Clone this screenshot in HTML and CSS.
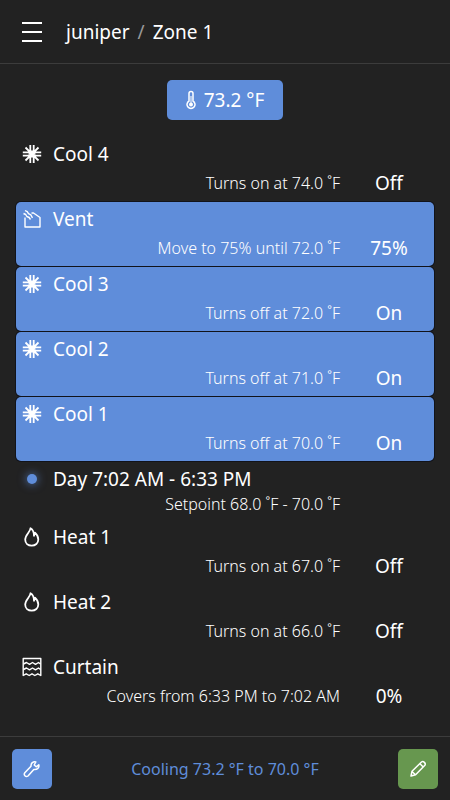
FILE: index.html
```html
<!DOCTYPE html>
<html lang="en">
<head>
  <meta charset="UTF-8" />
  <meta name="viewport" content="width=device-width, initial-scale=1.0" />
  <title>juniper / Zone 1</title>
  <link rel="stylesheet" href="styles.css">
</head>
<body>
  <svg class="sprite" aria-hidden="true">
    <symbol id="icon-cool" viewBox="0 0 20 20">
      <path d="M3.500 3.500l13 13M16.500 3.500l-13 13M8.300 1v5l1.700 3 1.700-3V1M8.300 19v-5l1.700-3 1.700 3v5M.8 8.300H6L9 10l-3 1.700H.8M19.200 8.300H14L11 10l3 1.700h5.200"/>
    </symbol>
    <symbol id="icon-vent" viewBox="0 0 20 20">
      <path d="M3 8.500V18h15V8.500L11.500 4H9.500"/>
      <path d="M1.500 4.500l2.200 1 1.200 2 2.200 1 1.400 2M3 1.500l2.200 1.200 1.300 2 2.300 1.200 1.700 3"/>
    </symbol>
    <symbol id="icon-heat" viewBox="0 0 20 20">
      <path d="M8.500 1.300C8.500 4.800 3.200 7.600 3.200 12.600c0 3.600 2.800 6.100 6.500 6.100s6.600-2.500 6.600-6.100c0-2.700-1.200-5-3.300-7l-1 3.200C12 5.300 10.800 2.600 8.500 1.300z"/>
    </symbol>
    <symbol id="icon-curtain" viewBox="0 0 20 20">
      <path d="M1.200 1.500h17.600v17l-3-1.700-3 1.700-2.800-1.700-2.800 1.700-3-1.700-3 1.700z"/>
      <path d="M1.500 7l3-1.500 3 1.800 3-1.800 3 1.800 3-1.800 2 1.500M1.500 12.500l3-1.500 3 1.800 3-1.800 3 1.800 3-1.800 2 1.500"/>
    </symbol>
  </svg>

  <header class="topbar">
    <button class="menu" aria-label="Menu">
      <svg viewBox="0 0 20 20"><path d="M0 1h20M0 10h20M0 19h20"/></svg>
    </button>
    <h1><a href="#juniper">juniper</a><span class="slash">/</span>Zone 1</h1>
  </header>

  <main>
    <button class="reading">
      <svg viewBox="0 0 10 20"><path d="M3 11V3.500a2 2 0 0 1 4 0V11a4 4 0 1 1-4 0z"/><path class="mercury" d="M5 6v8"/><circle class="dot" cx="5" cy="14.500" r="2"/></svg>
      73.2 °F
    </button>

    <ul class="stages">
      <li class="stage">
        <svg class="icon"><use href="#icon-cool"/></svg>
        <span class="name">Cool 4</span>
        <span class="detail">Turns on at 74.0 ˚F</span>
        <span class="value">Off</span>
      </li>
      <li class="stage active">
        <svg class="icon fine"><use href="#icon-vent"/></svg>
        <span class="name">Vent</span>
        <span class="detail">Move to 75% until 72.0 ˚F</span>
        <span class="value">75%</span>
      </li>
      <li class="stage active">
        <svg class="icon"><use href="#icon-cool"/></svg>
        <span class="name">Cool 3</span>
        <span class="detail">Turns off at 72.0 ˚F</span>
        <span class="value">On</span>
      </li>
      <li class="stage active">
        <svg class="icon"><use href="#icon-cool"/></svg>
        <span class="name">Cool 2</span>
        <span class="detail">Turns off at 71.0 ˚F</span>
        <span class="value">On</span>
      </li>
      <li class="stage active">
        <svg class="icon"><use href="#icon-cool"/></svg>
        <span class="name">Cool 1</span>
        <span class="detail">Turns off at 70.0 ˚F</span>
        <span class="value">On</span>
      </li>
      <li class="stage period">
        <span class="now"></span>
        <span class="name">Day 7:02 AM - 6:33 PM</span>
        <span class="detail">Setpoint 68.0 ˚F - 70.0 ˚F</span>
      </li>
      <li class="stage">
        <svg class="icon"><use href="#icon-heat"/></svg>
        <span class="name">Heat 1</span>
        <span class="detail">Turns on at 67.0 ˚F</span>
        <span class="value">Off</span>
      </li>
      <li class="stage">
        <svg class="icon"><use href="#icon-heat"/></svg>
        <span class="name">Heat 2</span>
        <span class="detail">Turns on at 66.0 ˚F</span>
        <span class="value">Off</span>
      </li>
      <li class="stage">
        <svg class="icon fine"><use href="#icon-curtain"/></svg>
        <span class="name">Curtain</span>
        <span class="detail">Covers from 6:33 PM to 7:02 AM</span>
        <span class="value">0%</span>
      </li>
    </ul>
  </main>

  <footer class="bottombar">
    <button class="tool" aria-label="Settings">
      <svg viewBox="0 0 18 18"><path d="M15.800 4.800l-2.600 2-2-1.800 1.600-3c-2.500-.6-5 1-4.800 4.200L1.800 12.800c-1.500 2 .8 4.800 3.200 3.200l5.800-6.600c3.400.5 5.800-1.600 5-4.600z"/></svg>
    </button>
    <p>Cooling 73.2 °F to 70.0 °F</p>
    <button class="tool edit" aria-label="Edit">
      <svg viewBox="0 0 18 18"><path d="M2 16l1-4.800L12.500 2c1.800-1.400 4.700 1.300 3.400 3.300L6.600 14.800zM11 3.800l3.200 3.200M3 11.500l3.400 3.200"/></svg>
    </button>
  </footer>
</body>
</html>
```
FILE: styles.css
```css
:root {
  --bg-color: #222222;
  --text-color: #ffffff;
  --accent-color: #5f8dda;
  --edit-color: #67974f;
  --line-color: #3c3c3c;
}
* {
  margin: 0;
  padding: 0;
  box-sizing: border-box;
}
body {
  display: flex;
  flex-direction: column;
  min-height: 100vh;
  font-family: 'Noto Sans', 'Open Sans', sans-serif;
  font-size: 19px;
  background-color: var(--bg-color);
  color: var(--text-color);
}
svg {
  fill: none;
  stroke: currentColor;
  stroke-width: 2;
  stroke-linejoin: round;
}
button {
  border: none;
  color: inherit;
  font: inherit;
  cursor: pointer;
}
a {
  color: inherit;
  text-decoration: none;
}
.sprite {
  position: absolute;
  width: 0;
  height: 0;
}
.topbar {
  display: flex;
  align-items: center;
  gap: 14px;
  height: 64px;
  padding: 0 12px;
  border-bottom: 1px solid var(--line-color);
}
.menu {
  display: grid;
  place-items: center;
  width: 40px;
  height: 40px;
  background: none;
}
.menu svg {
  width: 20px;
  height: 20px;
}
h1 {
  font-size: 19px;
  font-weight: 400;
}
.slash {
  margin: 0 8px;
  color: #999999;
}
main {
  flex: 1;
  padding: 16px;
}
.reading {
  display: flex;
  align-items: center;
  justify-content: center;
  gap: 8px;
  width: 116px;
  height: 40px;
  margin: 0 auto 17px;
  border-radius: 5px;
  background-color: var(--accent-color);
}
.reading svg {
  width: 10px;
  height: 20px;
  stroke-width: 1.5;
}
.reading .mercury {
  stroke-width: 1;
}
.reading .dot {
  fill: currentColor;
  stroke: none;
}
.stages {
  display: grid;
  gap: 1px;
  list-style: none;
}
.stage {
  display: grid;
  grid-template-columns: 37px 1fr 90px;
  row-gap: 2px;
  padding: 4px 0;
  border-radius: 5px;
  line-height: 28px;
}
.stage.active {
  background-color: var(--accent-color);
  box-shadow: 0 0 0 1px #11131a;
}
.icon {
  width: 20px;
  height: 20px;
  margin: 3px 6px;
  stroke-width: 1.8;
}
.icon.fine {
  stroke-width: 1.4;
}
.name {
  grid-column: 2 / 4;
  line-height: 26px;
}
.detail {
  grid-column: 1 / 3;
  padding-right: 4px;
  font-size: 16px;
  font-weight: 300;
  text-align: right;
}
.value {
  text-align: center;
}
.now {
  width: 10px;
  height: 10px;
  margin: 8px 11px;
  border-radius: 50%;
  background-color: var(--accent-color);
  box-shadow: 0 0 8px 1px #5f8dda99;
}
.period .detail {
  line-height: 21px;
}
.bottombar {
  display: flex;
  align-items: center;
  justify-content: space-between;
  height: 64px;
  padding: 0 12px;
  border-top: 1px solid var(--line-color);
  color: var(--accent-color);
  font-size: 16px;
}
.tool {
  display: grid;
  place-items: center;
  width: 40px;
  height: 40px;
  border-radius: 5px;
  background-color: var(--accent-color);
  color: var(--text-color);
}
.tool.edit {
  background-color: var(--edit-color);
}
.tool svg {
  width: 18px;
  height: 18px;
  stroke-width: 1.5;
}
```
